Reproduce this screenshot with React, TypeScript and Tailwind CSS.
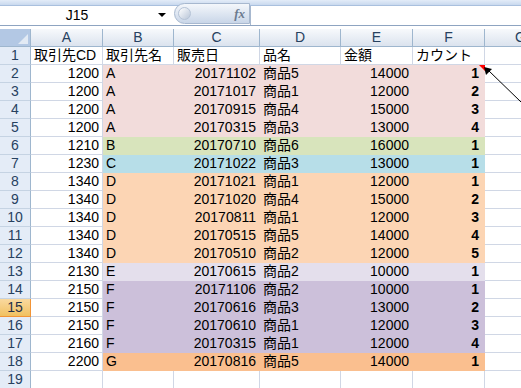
const rows: [string, string, string, string, string, string][] = [
  ["1200", "A", "20171102", "商品5", "14000", "1"],
  ["1200", "A", "20171017", "商品1", "12000", "2"],
  ["1200", "A", "20170915", "商品4", "15000", "3"],
  ["1200", "A", "20170315", "商品3", "13000", "4"],
  ["1210", "B", "20170710", "商品6", "16000", "1"],
  ["1230", "C", "20171022", "商品3", "13000", "1"],
  ["1340", "D", "20171021", "商品1", "12000", "1"],
  ["1340", "D", "20171020", "商品4", "15000", "2"],
  ["1340", "D", "20170811", "商品1", "12000", "3"],
  ["1340", "D", "20170515", "商品5", "14000", "4"],
  ["1340", "D", "20170510", "商品2", "12000", "5"],
  ["2130", "E", "20170615", "商品2", "10000", "1"],
  ["2150", "F", "20171106", "商品2", "10000", "1"],
  ["2150", "F", "20170616", "商品3", "13000", "2"],
  ["2150", "F", "20170610", "商品1", "12000", "3"],
  ["2160", "F", "20170315", "商品1", "12000", "4"],
  ["2200", "G", "20170816", "商品5", "14000", "1"],
];

const fills: Record<string, string> = {
  A: "bg-[#f2dcdb]",
  B: "bg-[#d8e4bc]",
  C: "bg-[#b7dee8]",
  D: "bg-[#fcd5b4]",
  E: "bg-[#e4dfec]",
  F: "bg-[#ccc0da]",
  G: "bg-[#fabf8f]",
};

const cell = "h-[18px] border-r border-b flex items-center whitespace-nowrap overflow-hidden";
const grid = "border-[#d0d7e5]";

function RowHead({ n, active }: { n: number; active?: boolean }) {
  return (
    <div
      className={
        active
          ? "h-[18px] flex items-center justify-center border-r border-b border-[#f29436] bg-gradient-to-b from-[#f9d99f] to-[#f1c15f] text-[#1f2f47]"
          : "h-[18px] flex items-center justify-center border-r border-b border-r-[#9eb6ce] border-b-[#c5d3e3] bg-[#e4ecf7] text-[#27415f]"
      }
    >
      {n}
    </div>
  );
}

export default function App() {
  return (
    <div
      className="relative w-[521px] h-[388px] overflow-hidden bg-white text-[14px] text-black"
      style={{ fontFamily: '"Liberation Sans", "Noto Sans CJK JP", sans-serif' }}
    >
      {/* ribbon edge */}
      <div className="h-[6px] bg-gradient-to-b from-[#e3ecf8] to-[#c9d9ee] border-b border-[#a9c0de]" />

      {/* formula bar */}
      <div className="h-[19px] flex bg-white">
        <div className="w-[174px] relative flex items-center justify-center">
          <span className="text-[14px] text-black -ml-[20px]">J15</span>
          <span className="absolute left-[158px] top-[7px] w-0 h-0 border-l-[4px] border-r-[4px] border-t-[4px] border-l-transparent border-r-transparent border-t-black" />
        </div>
        <div className="w-[76px] -mt-[3px] h-[21px] rounded-l-full border border-[#a7b8cf] bg-gradient-to-b from-[#f4f7fb] to-[#c9d6e8] relative flex items-center justify-end pr-[4px]">
          <span className="absolute left-[3px] top-[3px] w-[13px] h-[13px] rounded-full bg-gradient-to-br from-[#ffffff] to-[#b9c6d8] border border-[#b5c3d6]" />
          <span className="italic font-bold text-[13px] text-[#6b7a8f]" style={{ fontFamily: '"Liberation Serif", serif' }}>
            fx
          </span>
        </div>
        <div className="flex-1 border-l border-[#a7b8cf]" />
      </div>
      <div className="h-[1px] bg-[#8ea4c1]" />
      <div className="h-[3px] bg-white" />

      {/* sheet */}
      <div className="w-[557px] grid grid-cols-[31px_72px_71px_86px_81px_72px_72px_72px]">
        <div className="h-[18px] relative border-r border-b border-[#9eb6ce] bg-[#b3c8e4]">
          <svg className="absolute right-[2px] bottom-[2px]" width="10" height="10" viewBox="0 0 10 10">
            <polygon points="10,0 10,10 0,10" fill="#e2eaf4" />
          </svg>
        </div>
        {["A", "B", "C", "D", "E", "F", "G"].map((c) => (
          <div
            key={c}
            className="h-[18px] flex items-center justify-center border-r border-b border-r-[#9eb6ce] border-b-[#9eb6ce] bg-gradient-to-b from-[#f7f9fc] to-[#dbe3ee] text-[#27415f]"
          >
            {c}
          </div>
        ))}

        <RowHead n={1} />
        <div className={`${cell} ${grid} pl-[3px]`}>取引先CD</div>
        <div className={`${cell} ${grid} pl-[3px]`}>取引先名</div>
        <div className={`${cell} ${grid} pl-[3px]`}>販売日</div>
        <div className={`${cell} ${grid} pl-[3px]`}>品名</div>
        <div className={`${cell} ${grid} pl-[3px]`}>金額</div>
        <div className={`${cell} ${grid} pl-[3px]`}>カウント</div>
        <div className={`${cell} ${grid}`} />

        {rows.map((r, i) => {
          const f = `${fills[r[1]]} border-transparent`;
          return [
            <RowHead key={`h${i}`} n={i + 2} active={i + 2 === 15} />,
            <div key={`a${i}`} className={`${cell} ${grid} justify-end pr-[3px]`}>{r[0]}</div>,
            <div key={`b${i}`} className={`${cell} ${f} pl-[3px]`}>{r[1]}</div>,
            <div key={`c${i}`} className={`${cell} ${f} justify-end pr-[3px]`}>{r[2]}</div>,
            <div key={`d${i}`} className={`${cell} ${f} pl-[3px]`}>{r[3]}</div>,
            <div key={`e${i}`} className={`${cell} ${f} justify-end pr-[3px]`}>{r[4]}</div>,
            <div key={`f${i}`} className={`${cell} ${f} justify-end pr-[5px] font-bold`}>{r[5]}</div>,
            <div key={`g${i}`} className={`${cell} ${grid}`} />,
          ];
        })}

        <RowHead n={19} />
        {[0, 1, 2, 3, 4, 5, 6].map((k) => (
          <div key={k} className={`${cell} ${grid}`} />
        ))}
      </div>

      {/* comment marker + arrow */}
      <svg className="absolute left-0 top-0 pointer-events-none" width="521" height="388">
        <polygon points="479,65 485,65 485,71" fill="#ff0000" />
        <line x1="521" y1="102" x2="488" y2="70" stroke="#000" strokeWidth="1" />
        <polygon points="484,67 492,69 486,75" fill="#000" />
      </svg>
    </div>
  );
}
